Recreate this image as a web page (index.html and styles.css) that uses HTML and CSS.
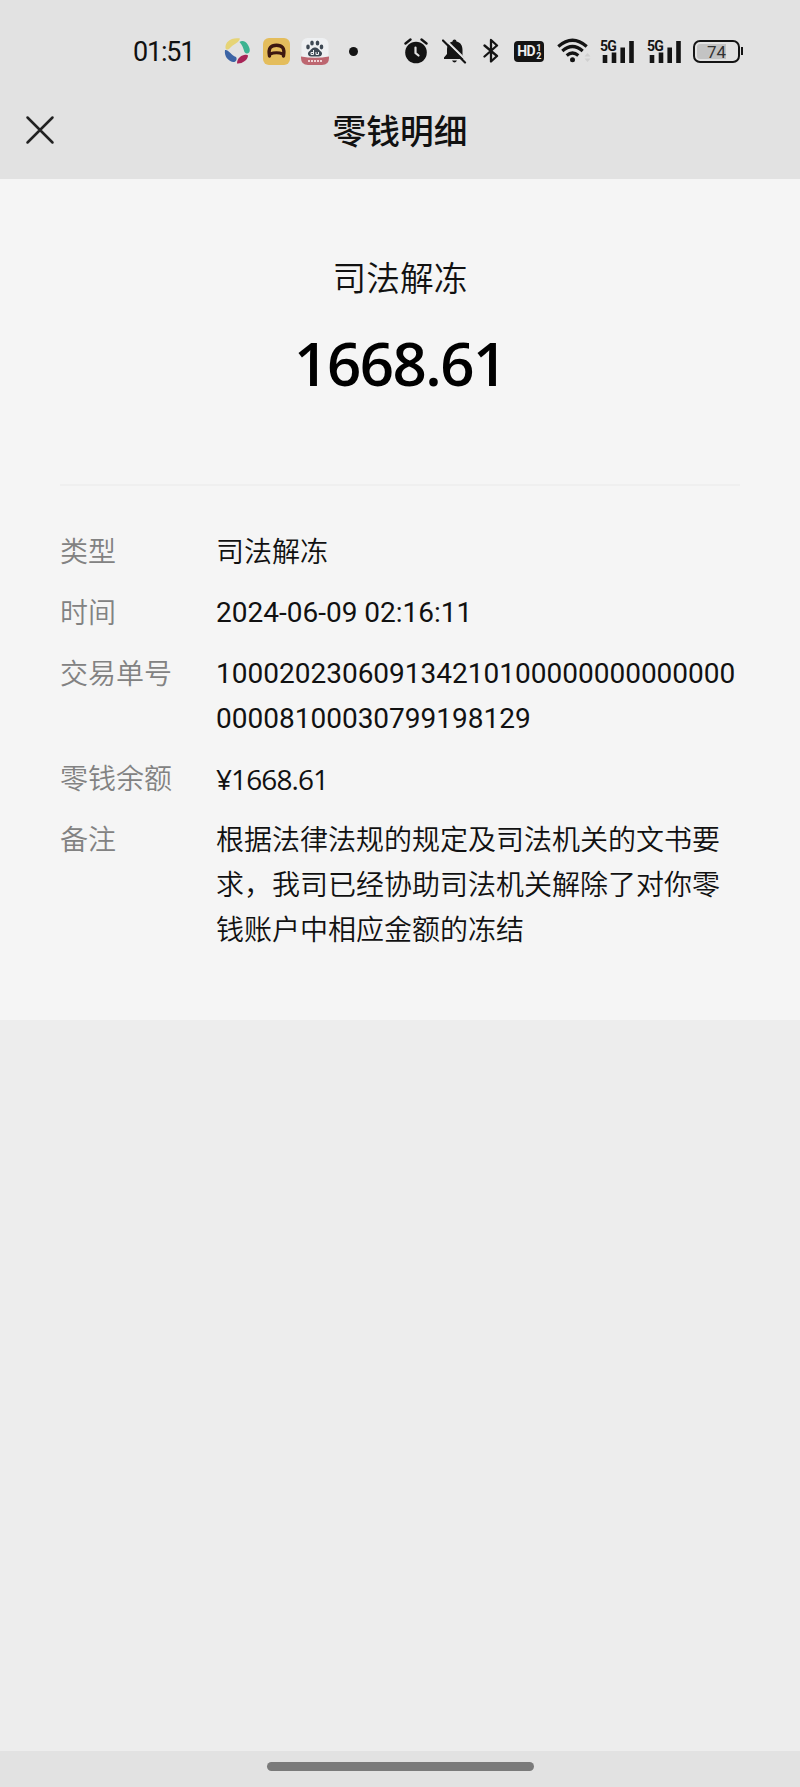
FILE: index.html
```html
<!DOCTYPE html>
<html lang="zh-CN">
<head>
    <meta charset="UTF-8">
    <meta name="viewport" content="width=device-width, initial-scale=1.0">
    <title>零钱明细</title>
    <link rel="stylesheet" href="styles.css">
</head>
<body>

<header class="header">
    <!-- 状态栏 -->
    <div class="status-bar">
        <span class="time">01:51</span>
        <svg class="app-swirl" width="28" height="28" viewBox="0 0 28 28">
            <path d="M1.500 11C1 5 7 0 16 1.500C15 6 9 7 6 11C4 13 2 13 1.500 11Z" fill="#e6d477"/>
            <path d="M15.500 5C18 3 22 4 24 8C27 13 26 17 22.500 16.500C19 16 21 11 15.500 5Z" fill="#3db391"/>
            <path d="M1 13C4 12 7 18 12 20C13.500 22 12 25.500 9 25C4 24 0 19 1 13Z" fill="#3c64a5"/>
            <path d="M24 18.500C24 23 18 27 13 26.500C13 22 16 19 20 18C22 17.500 23.500 17.500 24 18.500Z" fill="#a82557"/>
        </svg>
        <svg class="app-yellow" width="27" height="27" viewBox="0 0 27 27">
            <rect width="27" height="27" rx="6" fill="#e4bd5c"/>
            <path d="M6.500 18C5 10 8 7.200 13.500 7.200S22 10 20.500 18" fill="none" stroke="#3d1810" stroke-width="3.400" stroke-linecap="round"/>
            <path d="M7 16Q13.500 13.500 20 16" fill="none" stroke="#3d1810" stroke-width="3"/>
        </svg>
        <svg class="app-paw" width="28" height="27" viewBox="0 0 28 27">
            <rect x=".5" width="27" height="27" rx="6" fill="#eef0f2"/>
            <path d="M0 18.500Q14 21 28 18.500V20Q28 27 21 27H7Q0 27 0 20Z" fill="#bd6670"/>
            <g fill="#3d4853">
                <ellipse cx="7" cy="9" rx="1.800" ry="2.400"/>
                <ellipse cx="11" cy="5" rx="1.800" ry="2.500"/>
                <ellipse cx="16.500" cy="5" rx="1.800" ry="2.500"/>
                <ellipse cx="20.500" cy="9" rx="1.800" ry="2.400"/>
                <path d="M14 9.500C11 9.500 10 12 8 13.500C6 15 7 18.500 10 18.500H18C21 18.500 22 15 20 13.500C18 12 17 9.500 14 9.500Z"/>
            </g>
            <path d="M12.500 12V16.500H10V14.500H12.500M15 14V16.500H17.500V14" fill="none" stroke="#eef0f2"/>
            <path d="M7 23H21" stroke="#efd2d5" stroke-width="2" stroke-dasharray="2 1"/>
        </svg>
        <span class="dot"></span>

        <svg class="alarm" width="24" height="26" viewBox="0 0 24 26">
            <circle cx="12" cy="14.500" r="10.800" fill="#141414"/>
            <path d="M1.500 5.500L6.500 1.500M22.500 5.500L17.500 1.500" stroke="#141414" stroke-width="2.400" stroke-linecap="round"/>
            <path d="M11.500 9.500V15L14.500 17.500" fill="none" stroke="#e2e2e2" stroke-width="2.200" stroke-linecap="round"/>
        </svg>
        <svg class="bell" width="25" height="25" viewBox="0 0 25 25">
            <path d="M12.500 0.500Q14.500 0.500 14.500 2.500C19 3.500 20.500 7 20.500 11V16L23 20H2V18.500L5 15V10C5 6 7 3.500 10.500 2.500Q10.500 0.500 12.500 0.500Z" fill="#141414"/>
            <path d="M10 21.500H15Q14 23.500 12.500 23.500T10 21.500Z" fill="#141414"/>
            <path d="M2.500 0L25 22" stroke="#e2e2e2" stroke-width="2.200"/>
            <path d="M1 1.500L23 23.500" stroke="#141414" stroke-width="2.200" stroke-linecap="round"/>
        </svg>
        <svg class="bluetooth" width="16" height="26" viewBox="0 0 16 26">
            <path d="M1.500 7.500L14 18L8 23.500V2L14 7.500L1.500 18.500" fill="none" stroke="#141414" stroke-width="2.300" stroke-linejoin="round" stroke-linecap="round"/>
        </svg>
        <span class="hd">HD<span class="hd-sim"><i>1</i><i>2</i></span></span>
        <svg class="wifi" width="34" height="26" viewBox="0 0 34 26">
            <g fill="none" stroke="#141414" stroke-width="3.200">
                <path d="M1.300 8.500Q15.500 -4 29.700 8.500"/>
                <path d="M5.300 13Q15.500 4 25.700 13"/>
                <path d="M9.700 17.500Q15.500 12.500 21.300 17.500"/>
            </g>
            <circle cx="15.500" cy="21.800" r="2.500" fill="#141414"/>
            <path d="M30.500 15L27.500 18.500H33.500ZM30.500 24L27.500 20.500H33.500Z" fill="#d0d0d0"/>
        </svg>
        <svg class="signal" width="35" height="25" viewBox="0 0 35 25">
            <text class="signal-text" x="0" y="11.500">5G</text>
            <path d="M5 16V24M14 13.500V24M22.700 8.500V24M31.500 2V24" stroke="#141414" stroke-width="4.600"/>
        </svg>
        <svg class="signal second" width="35" height="25" viewBox="0 0 35 25">
            <text class="signal-text" x="0" y="11.500">5G</text>
            <path d="M5 16V24M14 13.500V24M22.700 8.500V24M31.500 2V24" stroke="#141414" stroke-width="4.600"/>
        </svg>
        <span class="battery"><span class="battery-level">74</span></span>
        <span class="battery-tip"></span>
    </div>

    <!-- 标题栏 -->
    <div class="nav">
        <svg class="close" width="30" height="30" viewBox="0 0 30 30">
            <path d="M2.500 2.500L27.500 27.500M27.500 2.500L2.500 27.500" stroke="#222" stroke-width="2.500" stroke-linecap="round"/>
        </svg>
        <h1 class="title">零钱明细</h1>
    </div>
</header>

<main class="detail">
    <div class="summary">
        <div class="summary-name">司法解冻</div>
        <div class="amount">1668.61</div>
    </div>

    <dl class="list">
        <dt>类型</dt>
        <dd>司法解冻</dd>
        <dt>时间</dt>
        <dd class="number">2024-06-09 02:16:11</dd>
        <dt>交易单号</dt>
        <dd class="number">100020230609134210100000000000000<br>00008100030799198129</dd>
        <dt>零钱余额</dt>
        <dd class="balance">¥1668.61</dd>
        <dt>备注</dt>
        <dd>根据法律法规的规定及司法机关的文书要求，我司已经协助司法机关解除了对你零钱账户中相应金额的冻结</dd>
    </dl>
</main>

<footer class="gesture-bar"><span class="gesture-pill"></span></footer>

</body>
</html>
```
FILE: styles.css
```css
* {
    box-sizing: border-box;
}
body {
    margin: 0;
    min-height: 1787px;
    display: flex;
    flex-direction: column;
    font-family: "Noto Sans CJK SC", sans-serif;
    color: #111;
    background-color: #ededed;
}
.header {
    height: 179px;
    background-color: #e2e2e2;
}

/* 状态栏 */
.status-bar {
    display: flex;
    align-items: center;
    height: 102px;
    padding-left: 133px;
}
.status-bar > * {
    flex-shrink: 0;
}
.time {
    width: 91px;
    padding-top: 2px;
    font-family: Roboto, sans-serif;
    font-size: 27px;
    letter-spacing: -1.2px;
}
.app-yellow {
    margin-left: 11px;
}
.app-paw {
    margin-left: 11px;
}
.dot {
    width: 9px;
    height: 9px;
    margin-left: 20px;
    border-radius: 50%;
    background-color: #141414;
}
.alarm {
    margin-left: 46px;
}
.bell {
    margin-left: 14px;
}
.bluetooth {
    margin-left: 16px;
}
.hd {
    display: flex;
    align-items: center;
    justify-content: center;
    width: 30px;
    height: 21px;
    margin: 1px 0 0 15px;
    border-radius: 4px;
    background-color: #141414;
    color: #eee;
    font: bold 14px/21px Roboto, sans-serif;
    letter-spacing: -0.5px;
}
.hd-sim {
    display: flex;
    flex-direction: column;
    margin-left: 1px;
    font-size: 9px;
    line-height: 8px;
}
.hd-sim i {
    font-style: normal;
}
.wifi {
    margin-left: 13px;
}
.signal {
    margin-left: 9px;
}
.signal.second {
    margin-left: 12px;
}
.signal-text {
    font: bold 14px Roboto, sans-serif;
    letter-spacing: -0.8px;
    fill: #141414;
}
.battery {
    width: 47px;
    height: 23px;
    margin-left: 11px;
    padding: 2px;
    border: 2px solid #141414;
    border-radius: 7px;
}
.battery-level {
    display: block;
    height: 15px;
    border-radius: 3px;
    background: linear-gradient(to right, #c3c3c3 74%, transparent 74%);
    font: 17px/16px Roboto, sans-serif;
    color: #333;
    text-align: center;
}
.battery-tip {
    width: 2px;
    height: 8px;
    margin-left: 1px;
    background-color: #141414;
}

/* 标题栏 */
.nav {
    display: grid;
    grid-template-columns: 54px 1fr 54px;
    align-items: center;
    height: 56px;
}
.close {
    margin-left: 25px;
}
.title {
    margin: 0;
    font-size: 33.7px;
    font-weight: 500;
    line-height: 56px;
    text-align: center;
}

.detail {
    height: 841px;
    padding: 70px 60px 0;
    background-color: #f5f5f5;
}
.summary {
    height: 237px;
    border-bottom: 2px solid #efefef;
    text-align: center;
}
.summary-name {
    font-size: 33.7px;
    font-weight: 350;
    line-height: 56px;
}
.amount {
    margin-top: 23px;
    font-family: "Open Sans", sans-serif;
    font-size: 60px;
    font-weight: 600;
    line-height: 70px;
    letter-spacing: -1.5px;
    color: #000;
}

/* 明细列表 */
.list {
    display: grid;
    grid-template-columns: 156px 1fr;
    row-gap: 15.8px;
    margin: 42px 0 0;
    font-size: 28px;
    font-weight: 350;
    line-height: 45px;
}
.list dt {
    color: #828282;
}
.list dd {
    margin: 0;
    width: 520px;
}
.list .number {
    padding-top: 1px;
    margin-bottom: -1px;
    font-family: Roboto, sans-serif;
    font-weight: 400;
}
.list .balance {
    padding-top: 2px;
    margin-bottom: -2px;
    font-family: "Open Sans", sans-serif;
    font-weight: 400;
    letter-spacing: -0.9px;
}

.gesture-bar {
    display: flex;
    justify-content: center;
    height: 36px;
    margin-top: auto;
    padding-top: 11px;
    background-color: #e2e2e2;
}
.gesture-pill {
    width: 267px;
    height: 9px;
    border-radius: 5px;
    background-color: #7a7a7a;
}
```
